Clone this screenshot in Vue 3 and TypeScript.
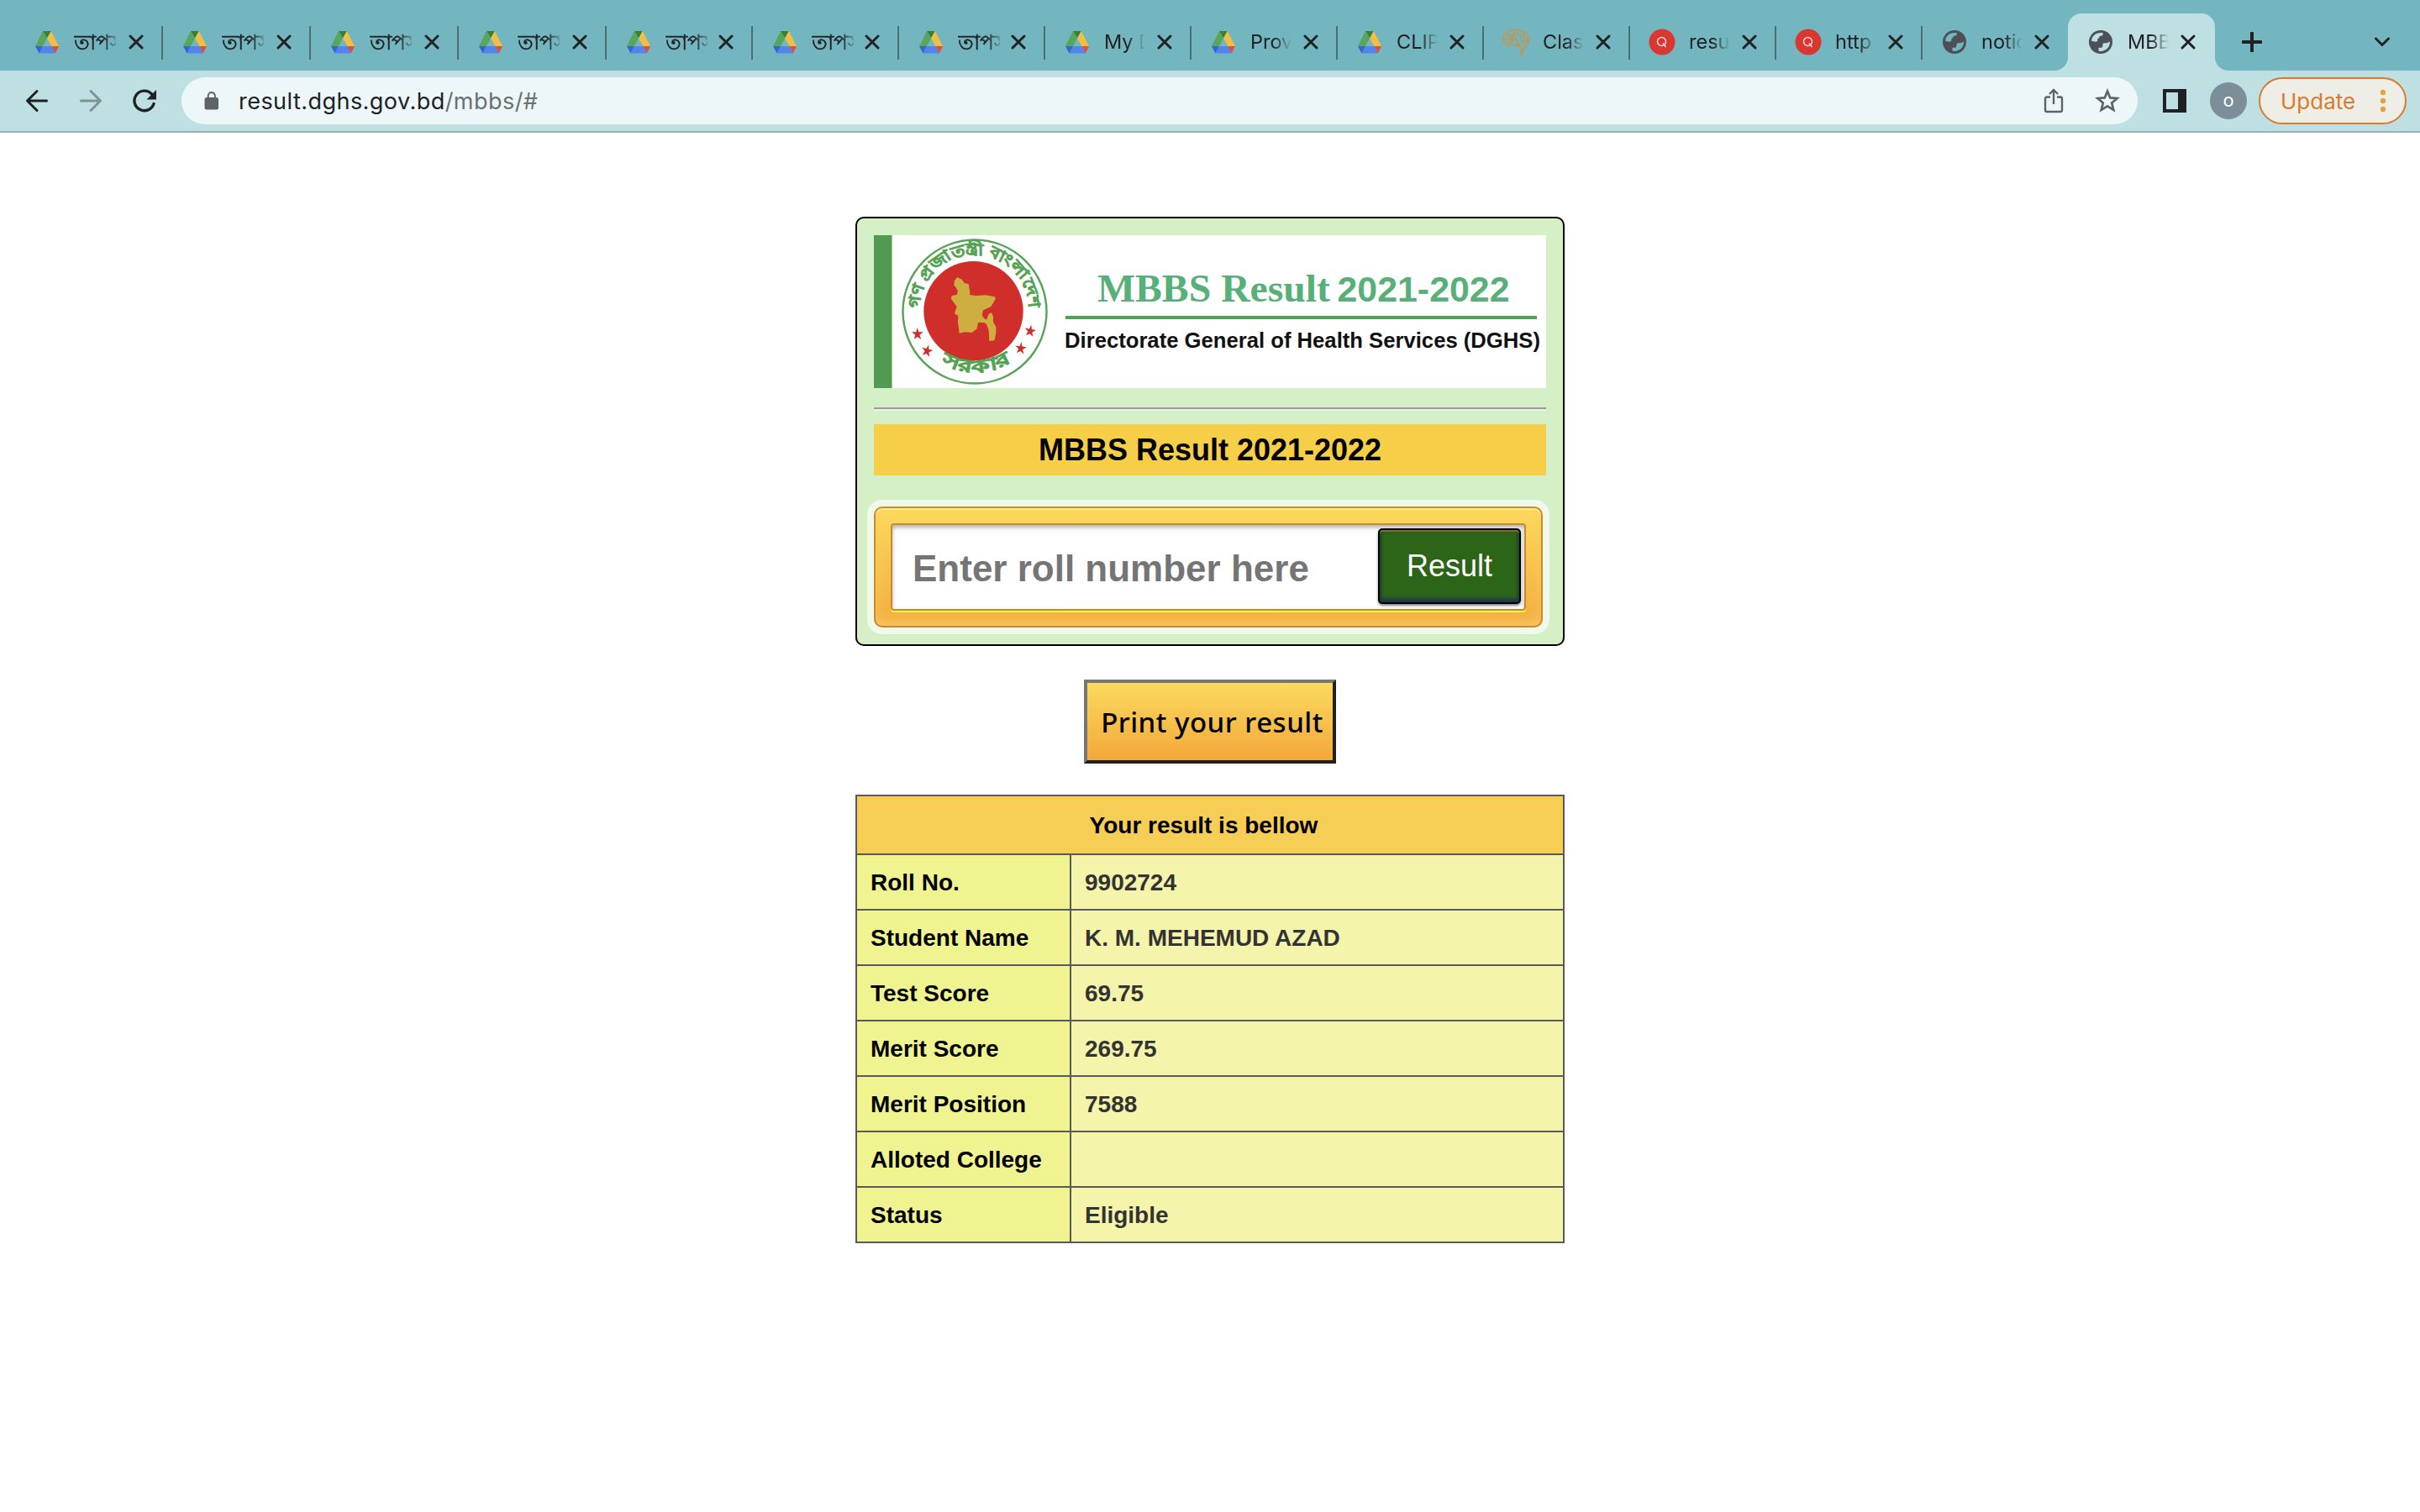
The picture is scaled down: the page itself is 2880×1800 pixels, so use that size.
<script setup lang="ts">
interface Tab {
  icon: 'drive' | 'brain' | 'red' | 'globe'
  title: string
  width: number
  bengali?: boolean
  active?: boolean
}

const tapos = 'তাপস'
const tabs: Tab[] = [
  { icon: 'drive', title: tapos, width: 176, bengali: true },
  { icon: 'drive', title: tapos, width: 176, bengali: true },
  { icon: 'drive', title: tapos, width: 176, bengali: true },
  { icon: 'drive', title: tapos, width: 176, bengali: true },
  { icon: 'drive', title: tapos, width: 174, bengali: true },
  { icon: 'drive', title: tapos, width: 174, bengali: true },
  { icon: 'drive', title: tapos, width: 174, bengali: true },
  { icon: 'drive', title: 'My D', width: 174 },
  { icon: 'drive', title: 'Prov', width: 174 },
  { icon: 'drive', title: 'CLIP', width: 174 },
  { icon: 'brain', title: 'Clas', width: 174 },
  { icon: 'red', title: 'resu', width: 174 },
  { icon: 'red', title: 'http', width: 174 },
  { icon: 'globe', title: 'notic', width: 174 },
  { icon: 'globe', title: 'MBB', width: 174, active: true },
]

const rows: [string, string][] = [
  ['Roll No.', '9902724'],
  ['Student Name', 'K. M. MEHEMUD AZAD'],
  ['Test Score', '69.75'],
  ['Merit Score', '269.75'],
  ['Merit Position', '7588'],
  ['Alloted College', ''],
  ['Status', 'Eligible'],
]
</script>

<template>
  <div class="window">
    <header class="chrome">
      <div class="tabstrip">
        <div
          v-for="(tab, i) in tabs"
          :key="i"
          class="tab"
          :class="{ active: tab.active, narrow: tab.width < 176, nosep: i === 13 || i === 14 }"
          :style="{ width: tab.width + 'px' }"
        >
          <span class="favicon">
            <svg v-if="tab.icon === 'drive'" width="30" height="28" viewBox="0 0 30 28">
              <path d="M10 1 19.800 1 15 9.500Z" fill="#37803b" />
              <path d="M10 1 15 9.500 10 19 1 19Z" fill="#5aa55c" />
              <path d="M19.800 1 29 19 20.500 19 15 9.500Z" fill="#f3be42" />
              <path d="M1 19 10 19 5.500 27.500Z" fill="#3367d0" />
              <path d="M10 19 20.500 19 24.800 27.500 5.500 27.500Z" fill="#5284ec" />
              <path d="M20.500 19 29 19 24.800 27.500Z" fill="#d8523e" />
            </svg>
            <svg v-else-if="tab.icon === 'brain'" width="32" height="32" viewBox="0 0 32 32" fill="none" stroke="#b99a58" stroke-width="1.700">
              <path d="M8 21.500C4 20 1 18 1.500 14 0 10 2 6 5.500 5 7 1.500 11 1 13 2.500 17 0 21 1 23 3.500 28 4 31 7 30.500 11 32 16 30 20 27 21L25.500 23M5.500 6V9H9M13 3V7L8 10M18 2.500V6L22 9V14L25 17V20M24 4.500 26 7V12L28 15M2 13H12M13 10 17 13V17L20 20V23M5 17H10M10 20H20M22.500 22V31M25.500 23V26L22.500 29" />
              <g fill="#74b6bf"><circle cx="9.500" cy="9.500" r="1.500" /><circle cx="12.500" cy="13" r="1.500" /><circle cx="14" cy="7" r="1.500" /><circle cx="10" cy="17" r="1.500" /><circle cx="19.500" cy="20" r="1.500" /><circle cx="22.500" cy="30" r="1.500" /><circle cx="28" cy="15" r="1.500" /></g>
            </svg>
            <svg v-else-if="tab.icon === 'red'" width="32" height="32" viewBox="0 0 32 32">
              <circle cx="16" cy="16" r="15.500" fill="#da3732" />
              <g fill="none" stroke="#fbdcda" stroke-width="1.500">
                <circle cx="15.500" cy="15.500" r="5" />
                <path d="M17 17.500 20.500 22" />
              </g>
            </svg>
            <svg v-else width="28" height="28" viewBox="0 0 28 28">
              <circle cx="14" cy="14" r="14" fill="#4d5056" />
              <path class="cut" d="M3 12.800C3.500 7 8 3 14 3H16.500C17 5.500 16.500 6.200 15 6.400 12.500 6.600 12.300 7.500 12.300 9.300 10.500 9.300 10 10 10.300 12.800 9 14 6 13.800 3 12.800Z" />
              <path class="cut" d="M25 13.500C25.300 20 20 25.200 13.300 25L11.500 24.600V20.800H14.500C16 20.800 16.600 19.500 16.400 17.800 16.200 15.800 17.300 15 18.500 15.200 21 15.500 22.500 15 25 13.500Z" />
            </svg>
          </span>
          <span class="title" :class="{ bengali: tab.bengali }">{{ tab.title }}</span>
          <svg class="close" width="18" height="18" viewBox="0 0 18 18">
            <path d="M2 2 16 16M16 2 2 16" fill="none" stroke="#202124" stroke-width="3" stroke-linecap="round" />
          </svg>
        </div>
        <svg class="plus" width="24" height="24" viewBox="0 0 24 24">
          <path d="M12 1.500V22.500M1.500 12H22.500" stroke="#202124" stroke-width="4" stroke-linecap="round" />
        </svg>
        <svg class="chevron" width="20" height="12" viewBox="0 0 20 12">
          <path d="M2.500 2 10 9.500 17.500 2" fill="none" stroke="#202124" stroke-width="3" stroke-linecap="round" />
        </svg>
      </div>

      <div class="toolbar">
        <svg class="nav" width="28" height="28" viewBox="0 0 28 28" fill="none" stroke="#202124" stroke-width="3" stroke-linecap="round" stroke-linejoin="round">
          <path d="M14 2.500 2.500 14 14 25.500M2.500 14H25.500" />
        </svg>
        <svg class="nav" width="28" height="28" viewBox="0 0 28 28" fill="none" stroke="#7f9395" stroke-width="3" stroke-linecap="round" stroke-linejoin="round">
          <path d="M14 2.500 25.500 14 14 25.500M25.500 14H2.500" />
        </svg>
        <svg class="nav" width="28" height="28" viewBox="0 0 28 28">
          <path d="M25 17.500A11.800 11.800 0 1 1 22.500 6" fill="none" stroke="#202124" stroke-width="3.400" stroke-linecap="round" />
          <path d="M28 1V12.500H16.500Z" fill="#202124" />
        </svg>
        <div class="omnibox">
          <svg class="lock" width="18" height="22" viewBox="0 0 18 22">
            <rect x="0.500" y="7" width="16.500" height="14.500" rx="2.500" fill="#5f6368" />
            <path d="M4.700 8V5.200A4.100 4.100 0 0 1 12.900 5.200V8" fill="none" stroke="#5f6368" stroke-width="2" />
          </svg>
          <span class="url">result.dghs.gov.bd<span class="path">/mbbs/#</span></span>
          <svg class="share" width="24" height="30" viewBox="0 0 24 30" fill="none" stroke="#5f6368" stroke-width="2.400">
            <path d="M8 10.500H4A2 2 0 0 0 2 12.500V26A2 2 0 0 0 4 28H20A2 2 0 0 0 22 26V12.500A2 2 0 0 0 20 10.500H16M12 19V2.500M7 7 12 2 17 7" />
          </svg>
          <svg class="star" width="30" height="30" viewBox="0 0 30 30">
            <path d="M15 3.500 18.200 11.400 26.700 12 20.200 17.500 22.300 25.800 15 21.300 7.700 25.800 9.800 17.500 3.300 12 11.800 11.400Z" fill="none" stroke="#5f6368" stroke-width="2.700" />
          </svg>
        </div>
        <svg class="panel" width="28" height="28" viewBox="0 0 28 28">
          <path d="M0 0H28V28H0ZM4 4V24H18V4Z" fill="#202124" fill-rule="evenodd" />
        </svg>
        <span class="avatar">o</span>
        <div class="update">
          <span>Update</span>
          <svg width="8" height="28" viewBox="0 0 8 28" fill="#e8a33d">
            <circle cx="4" cy="4" r="3.200" /><circle cx="4" cy="14" r="3.200" /><circle cx="4" cy="24" r="3.200" />
          </svg>
        </div>
      </div>
    </header>

    <main class="page">
      <section class="card">
        <svg class="banner" width="800" height="182" viewBox="0 0 800 182">
          <rect width="800" height="182" fill="#fff" />
          <rect width="21.500" height="182" fill="#529a52" />
          <circle cx="120" cy="91" r="85.500" fill="#fff" stroke="#57a356" stroke-width="2.400" />
          <circle cx="118.500" cy="90.300" r="59.200" fill="#cf2e2b" />
          <g transform="scale(0.333333) translate(-90 -90)">
            <path
              fill="#cfae41"
              d="M378 252 388 240 404 248 414 262 428 264 433 292 432 303 455 306 490 304 522 310 524 318 508 345 480 358 476 375 484 388 492 392 500 372 510 366 516 380 516 400 526 418 526 440 520 466 502 468 500 430 492 408 484 402 462 402 458 424 440 438 415 436 395 440 390 400 391 378 378 370 386 345 366 318 368 306 386 303 390 288 376 268Z"
            />
            <g fill="#cf2e2b">
              <path id="star" d="M245 420 250 436 266 436 253 446 259 462 246 453 233 461 238 446 225 436 241 436Z" />
              <use href="#star" transform="translate(35 60) rotate(15 245 441)" />
              <use href="#star" transform="translate(403 -11) rotate(10 245 441)" />
              <use href="#star" transform="translate(369 51) rotate(8 245 441)" />
            </g>
          </g>
          <path id="arcTop" d="M54.500 88.500A65 65 0 0 1 184.500 88.500" fill="none" />
          <path id="arcBottom" d="M60 136A80 80 0 0 0 180 136" fill="none" />
          <g class="seal">
            <text font-size="19"><textPath href="#arcTop" startOffset="2" textLength="200" lengthAdjust="spacingAndGlyphs">গণ প্রজাতন্ত্রী বাংলাদেশ</textPath></text>
            <text font-size="21"><textPath href="#arcBottom" startOffset="26" textLength="88" lengthAdjust="spacingAndGlyphs">সরকার</textPath></text>
          </g>
          <text class="serif" x="266" y="78.500" textLength="277" lengthAdjust="spacingAndGlyphs">MBBS Result</text>
          <text class="digits" x="551.500" y="78.500" textLength="205" lengthAdjust="spacingAndGlyphs">2021-2022</text>
          <rect x="228" y="96" width="561" height="4" fill="#55a058" />
          <text class="dept" x="227" y="134" textLength="566" lengthAdjust="spacingAndGlyphs">Directorate General of Health Services (DGHS)</text>
        </svg>
        <div class="rule"></div>
        <h1 class="heading">MBBS Result 2021-2022</h1>
        <form class="search" @submit.prevent>
          <div class="field">
            <input type="text" placeholder="Enter roll number here" />
            <button type="submit">Result</button>
          </div>
        </form>
      </section>

      <button class="print" type="button">Print your result</button>

      <table class="result">
        <colgroup>
          <col class="col-label" />
          <col />
        </colgroup>
        <thead>
          <tr><th colspan="2">Your result is bellow</th></tr>
        </thead>
        <tbody>
          <tr v-for="[label, value] in rows" :key="label">
            <td class="label">{{ label }}</td>
            <td class="value">{{ value }}</td>
          </tr>
        </tbody>
      </table>
    </main>
  </div>
</template>

<style>
body {
  margin: 0;
  background: #fff;
}
</style>

<style scoped>
* {
  box-sizing: border-box;
}
svg {
  display: block;
  flex: none;
}
.window {
  width: 2880px;
  height: 1800px;
  overflow: hidden;
  background: #fff;
  font-family: "Liberation Sans", Arial, sans-serif;
}
.chrome {
  font-family: Inter, "Noto Sans", sans-serif;
}
.tabstrip {
  display: flex;
  align-items: stretch;
  height: 84px;
  padding: 16px 35px 0 18px;
  background: #74b6bf;
}
.tab {
  position: relative;
  display: flex;
  flex: none;
  align-items: center;
  padding-left: 22px;
}
.tab::after {
  content: "";
  position: absolute;
  right: 0;
  top: 15px;
  width: 2px;
  height: 40px;
  background: #4b6d73;
}
.tab.nosep::after {
  display: none;
}
.tab.active {
  border-radius: 16px 16px 0 0;
  background: #bfe0e2;
  box-shadow: -1px 0 0 #bfe0e2;
}
.tab.active::before {
  content: "";
  position: absolute;
  left: -17px;
  right: -16px;
  bottom: 0;
  height: 16px;
  background:
    radial-gradient(circle at 0 0, transparent 15.500px, #bfe0e2 16.500px) left / 16px 16px no-repeat,
    radial-gradient(circle at 100% 0, transparent 15.500px, #bfe0e2 16.500px) right / 16px 16px no-repeat;
}
.cut {
  fill: #74b6bf;
}
.tab.active .cut {
  fill: #bfe0e2;
}
.favicon {
  display: flex;
  flex: none;
  align-items: center;
  justify-content: center;
  width: 32px;
  height: 32px;
}
.title {
  flex: none;
  width: 50px;
  margin-left: 16px;
  overflow: hidden;
  white-space: nowrap;
  font-size: 23.500px;
  line-height: 40px;
  color: #202124;
  -webkit-mask-image: linear-gradient(90deg, #000 55%, transparent 98%);
  mask-image: linear-gradient(90deg, #000 55%, transparent 98%);
}
.title.bengali {
  font-size: 24.500px;
  -webkit-text-stroke: 0.5px #202124;
  -webkit-mask-image: linear-gradient(90deg, #000 68%, transparent 108%);
  mask-image: linear-gradient(90deg, #000 68%, transparent 108%);
}
.close {
  margin-left: 15px;
}
.narrow .close {
  margin-left: 13px;
}
.plus {
  align-self: center;
  margin-left: 32px;
}
.chevron {
  align-self: center;
  margin-left: auto;
}
.toolbar {
  display: flex;
  align-items: center;
  height: 74px;
  padding: 0 16px 2px 30px;
  background: #bfe0e2;
  box-shadow: inset 0 -2px 0 #9ab3b7;
}
.nav {
  margin-right: 36px;
}
.omnibox {
  display: flex;
  flex: none;
  align-items: center;
  width: 2328px;
  height: 56px;
  margin-left: -6px;
  padding: 0 21px 0 27px;
  border-radius: 28px;
  background: #eef7f8;
}
.url {
  margin-left: 23px;
  font-size: 27px;
  letter-spacing: 0.46px;
  color: #202124;
  white-space: nowrap;
}
.path {
  color: #6a7073;
}
.share {
  margin-left: auto;
}
.star {
  margin-left: 37px;
}
.panel {
  margin-left: 30px;
}
.avatar {
  display: flex;
  align-items: center;
  justify-content: center;
  width: 44px;
  height: 44px;
  margin-left: 28px;
  padding-bottom: 3px;
  border-radius: 50%;
  background: #7d8e9b;
  color: #fff;
  font-size: 22px;
}
.update {
  display: flex;
  align-items: center;
  justify-content: space-between;
  width: 176px;
  height: 56px;
  margin-left: 14px;
  padding: 0 22px 0 24px;
  border: 2px solid #d77c2d;
  border-radius: 28px;
  background: #efeee6;
  color: #d77c2d;
  font-size: 26px;
}
.page {
  display: flex;
  flex-direction: column;
  align-items: center;
  padding-top: 100px;
}
.card {
  width: 844px;
  height: 511px;
  padding: 20px;
  border: 2px solid #000;
  border-radius: 10px;
  background: #d5efc6;
}
.seal {
  fill: #57a356;
  stroke: #57a356;
  stroke-width: 0.8px;
  font-family: "Noto Sans", sans-serif;
  font-weight: 700;
}
.serif {
  fill: #57b077;
  font: 700 47px "Liberation Serif", serif;
}
.digits {
  fill: #57b077;
  font: 700 42px "Liberation Sans", sans-serif;
}
.dept {
  fill: #111;
  font: 700 25px "Liberation Sans", sans-serif;
}
.rule {
  height: 4px;
  margin-top: 23px;
  border-top: 2px solid #9a9a9a;
  border-bottom: 2px solid #eee;
}
.heading {
  height: 61px;
  margin: 16px 0 0;
  background: #f7ce47;
  color: #000;
  font-size: 36px;
  line-height: 61px;
  text-align: center;
}
.search {
  width: 796px;
  height: 144px;
  margin-top: 37px;
  padding: 18px;
  border: 2px solid #c88b30;
  border-radius: 10px;
  background: linear-gradient(#fbda5d, #f3ac3e);
  box-shadow:
    0 0 0 8px rgba(255, 255, 255, 0.65),
    inset 0 2px 0 #fff08c,
    inset 0 -8px 16px -4px #f9cc68;
}
.field {
  display: flex;
  align-items: center;
  width: 756px;
  height: 104px;
  padding-right: 4px;
  border: 2px solid #c88b30;
  border-radius: 4px;
  background: #fff;
  box-shadow:
    0 2px 0 #fffb45,
    inset 0 3px 5px rgba(0, 0, 0, 0.3);
}
.field input {
  flex: 1;
  min-width: 0;
  height: 60px;
  margin-top: 4px;
  padding: 0 0 0 24px;
  border: 0;
  outline: 0;
  background: transparent;
  font: 700 44px "Liberation Sans", Arial, sans-serif;
}
.field input::placeholder {
  color: #757575;
  opacity: 1;
}
.field button {
  width: 170px;
  height: 90px;
  margin-top: -2px;
  padding: 0;
  border: 2px solid #000;
  border-radius: 5px;
  background: #2c6418;
  box-shadow:
    0 2px 3px rgba(0, 0, 0, 0.5),
    inset 0 2px 0 #8a6b24,
    inset 0 -4px 5px #1c3550,
    inset 0 0 4px rgba(0, 0, 0, 0.5);
  color: #fff;
  font: 36px "Liberation Sans", Arial, sans-serif;
}
.print {
  width: 300px;
  height: 100px;
  margin-top: 40px;
  padding: 0 0 0 5px;
  border: 4px solid;
  border-color: #767676 #202020 #202020 #767676;
  background: linear-gradient(#fbda5d, #f2a83c);
  color: #000;
  font: 500 33px "Noto Sans", sans-serif;
  letter-spacing: 0.5px;
  white-space: nowrap;
}
.result {
  width: 844px;
  margin-top: 37px;
  border-collapse: collapse;
  table-layout: fixed;
  font-size: 28px;
  font-weight: 700;
}
.col-label {
  width: 255px;
}
.result th,
.result td {
  border: 2px solid #58595b;
}
.result th {
  height: 70px;
  padding: 2px 15px 0 0;
  background: #f6cd55;
}
.result td {
  height: 66px;
  padding: 2px 16px 0;
  line-height: 32px;
}
.label {
  background: #eff490;
  color: #000;
}
.value {
  background: #f4f4aa;
  color: #333;
}
</style>
